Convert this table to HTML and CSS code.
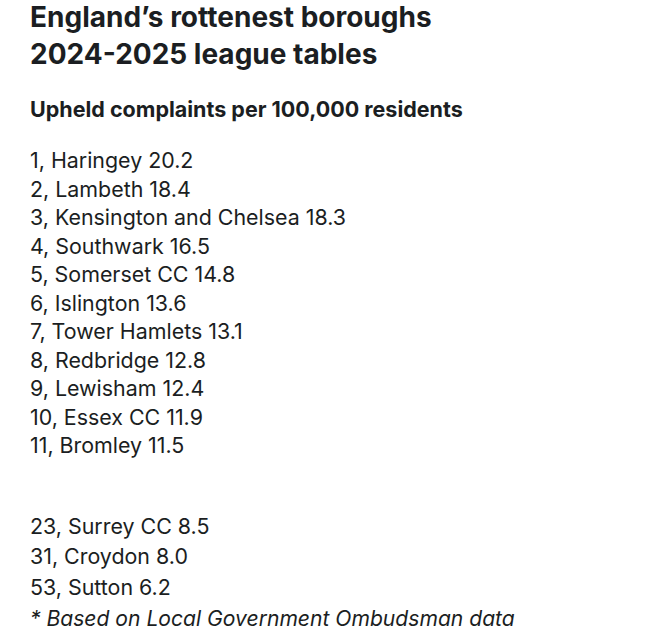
FILE: index.html
```html
<!DOCTYPE html>
<html lang="en">
<head>
<meta charset="utf-8">
<link rel="stylesheet" href="styles.css">
</head>
<body>
<main class="page">
  <h1 class="title">England’s rottenest boroughs<br>2024-2025 league tables</h1>
  <h2 class="subtitle">Upheld complaints per 100,000 residents</h2>
  <div class="list top">
    <p>1, Haringey 20.2</p>
    <p>2, Lambeth 18.4</p>
    <p>3, Kensington and Chelsea 18.3</p>
    <p>4, Southwark 16.5</p>
    <p>5, Somerset CC 14.8</p>
    <p>6, Islington 13.6</p>
    <p>7, Tower Hamlets 13.1</p>
    <p>8, Redbridge 12.8</p>
    <p>9, Lewisham 12.4</p>
    <p>10, Essex CC 11.9</p>
    <p>11, Bromley 11.5</p>
  </div>
  <div class="list rest">
    <p>23, Surrey CC 8.5</p>
    <p>31, Croydon 8.0</p>
    <p>53, Sutton 6.2</p>
    <p class="note">* Based on Local Government Ombudsman data</p>
  </div>
</main>
</body>
</html>
```
FILE: styles.css
```css
html, body {
  margin: 0;
  padding: 0;
  background: #ffffff;
}
.page {
  padding: 0 0 0 30px;
  font-family: Inter, "Noto Sans", sans-serif;
  color: #1b1e22;
}
.title {
  margin: 0;
  font-size: 28px;
  line-height: 37px;
  font-weight: 700;
  position: relative;
  top: -1px;
}
.subtitle {
  margin: 21px 0 0;
  font-size: 21.5px;
  line-height: 28px;
  font-weight: 700;
}
.list {
  font-size: 21.4px;
}
.list p {
  margin: 0;
}
.top {
  margin-top: 23px;
  line-height: 28.5px;
}
.rest {
  margin-top: 51px;
  line-height: 30.7px;
}
.note {
  font-style: italic;
  font-size: 21.1px;
  position: relative;
  top: 1px;
}
```
